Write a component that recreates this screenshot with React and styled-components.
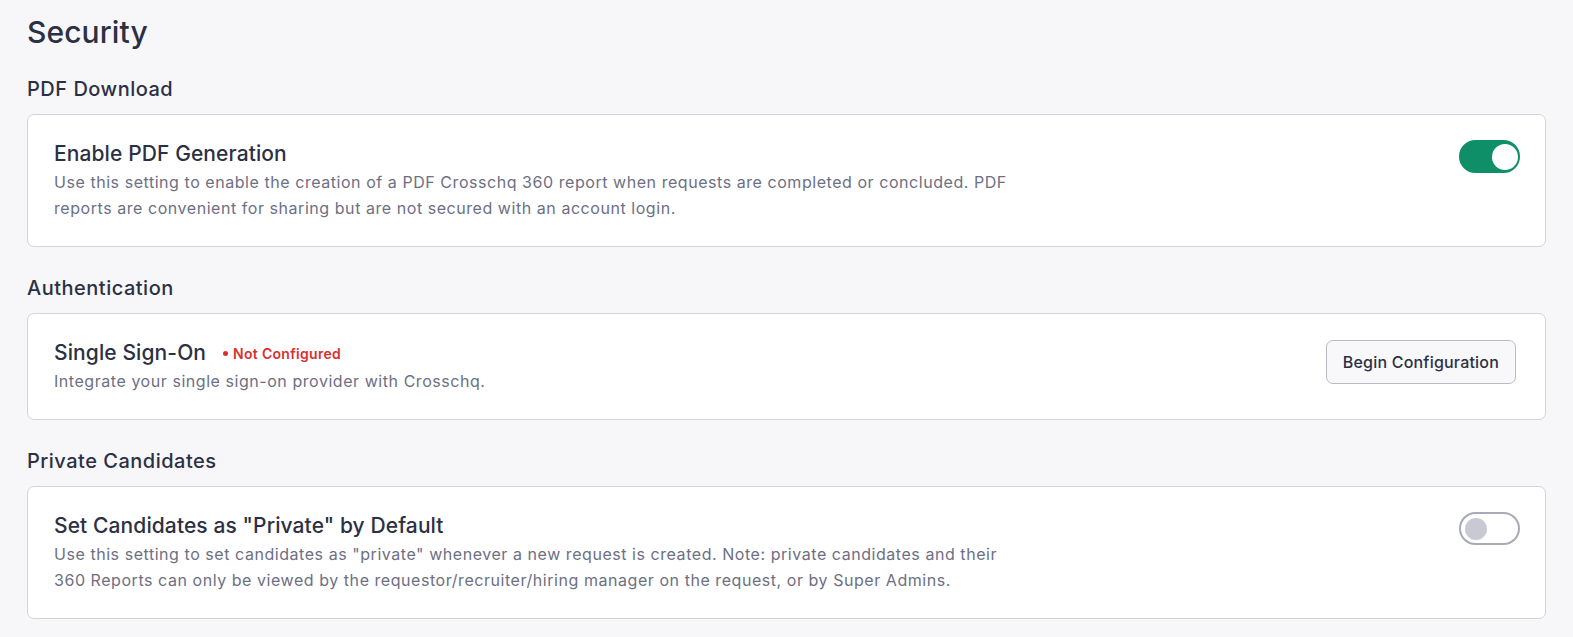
import React, { useState } from 'react'
import styled, { createGlobalStyle } from 'styled-components'

const GlobalStyle = createGlobalStyle`
  * {
    box-sizing: border-box;
  }
  body {
    margin: 0;
    background-color: #f7f7f9;
    font-family: Inter, 'Noto Sans', sans-serif;
    color: #2c3044;
  }
`

const Page = styled.main`
  padding: 14px 27px 20px;
  display: flex;
  flex-direction: column;
`

const PageTitle = styled.h1`
  margin: 0 0 25px;
  font-size: 30px;
  line-height: 36px;
  font-weight: 500;
  letter-spacing: 0.1px;
  color: #2c3044;
`

const Section = styled.section`
  display: flex;
  flex-direction: column;
  gap: 11px;
  margin-bottom: 27px;
`

const SectionLabel = styled.h2`
  margin: 0;
  font-size: 20px;
  line-height: 28px;
  font-weight: 500;
  letter-spacing: 0.5px;
  color: #2c3044;
`

const Card = styled.div`
  display: flex;
  align-items: flex-start;
  justify-content: space-between;
  gap: 24px;
  padding: 25px 25px 25px 26px;
  background: #fff;
  border: 1px solid #d3d3dc;
  border-radius: 7px;
`

const CardText = styled.div`
  display: flex;
  flex-direction: column;
  gap: 1px;
`

const TitleRow = styled.div`
  display: flex;
  align-items: center;
  gap: 17px;
`

const CardTitle = styled.h3`
  margin: 0;
  font-size: 21px;
  line-height: 28px;
  font-weight: 500;
  letter-spacing: 0.1px;
  color: #2c3044;
`

const Description = styled.p`
  margin: 0;
  font-size: 16px;
  line-height: 26px;
  letter-spacing: 0.55px;
  color: #6d6f84;
`

const Status = styled.span`
  display: inline-flex;
  align-items: center;
  gap: 5px;
  font-size: 14px;
  font-weight: 600;
  letter-spacing: 0.3px;
  color: #d9302f;
  &::before {
    content: '';
    width: 5px;
    height: 5px;
    border-radius: 50%;
    background: #d9302f;
  }
`

const Track = styled.button`
  flex-shrink: 0;
  position: relative;
  width: 61px;
  height: 33px;
  padding: 0;
  border-radius: 17px;
  cursor: pointer;
  border: 2px solid ${(p) => (p.$on ? '#0e8f67' : '#a9a9b8')};
  background: ${(p) => (p.$on ? '#0e8f67' : '#fff')};
`

const Thumb = styled.span`
  position: absolute;
  top: 50%;
  transform: translateY(-50%);
  border-radius: 50%;
  width: ${(p) => (p.$on ? '26px' : '22px')};
  height: ${(p) => (p.$on ? '26px' : '22px')};
  left: ${(p) => (p.$on ? '31px' : '4px')};
  background: ${(p) => (p.$on ? '#fff' : '#c9c9d3')};
`

const Button = styled.button`
  flex-shrink: 0;
  margin: 1px 4px 0 0;
  height: 44px;
  padding: 0 16px;
  font-family: inherit;
  font-size: 16px;
  font-weight: 500;
  letter-spacing: 0.2px;
  color: #2c3044;
  background: #f8f8fa;
  border: 1px solid #b9b9c7;
  border-radius: 7px;
  cursor: pointer;
`

function Toggle({ initial }) {
  const [on, setOn] = useState(initial)
  return (
    <Track $on={on} onClick={() => setOn(!on)} aria-pressed={on}>
      <Thumb $on={on} />
    </Track>
  )
}

export default function App() {
  return (
    <>
      <GlobalStyle />
      <Page>
        <PageTitle>Security</PageTitle>

        <Section>
          <SectionLabel>PDF Download</SectionLabel>
          <Card>
            <CardText>
              <CardTitle>Enable PDF Generation</CardTitle>
              <Description>
                Use this setting to enable the creation of a PDF Crosschq 360 report when requests are completed or concluded. PDF
                <br />
                reports are convenient for sharing but are not secured with an account login.
              </Description>
            </CardText>
            <Toggle initial={true} />
          </Card>
        </Section>

        <Section>
          <SectionLabel>Authentication</SectionLabel>
          <Card>
            <CardText>
              <TitleRow>
                <CardTitle>Single Sign-On</CardTitle>
                <Status>Not Configured</Status>
              </TitleRow>
              <Description>Integrate your single sign-on provider with Crosschq.</Description>
            </CardText>
            <Button>Begin Configuration</Button>
          </Card>
        </Section>

        <Section>
          <SectionLabel>Private Candidates</SectionLabel>
          <Card>
            <CardText>
              <CardTitle>Set Candidates as "Private" by Default</CardTitle>
              <Description>
                Use this setting to set candidates as "private" whenever a new request is created. Note: private candidates and their
                <br />
                360 Reports can only be viewed by the requestor/recruiter/hiring manager on the request, or by Super Admins.
              </Description>
            </CardText>
            <Toggle initial={false} />
          </Card>
        </Section>
      </Page>
    </>
  )
}
